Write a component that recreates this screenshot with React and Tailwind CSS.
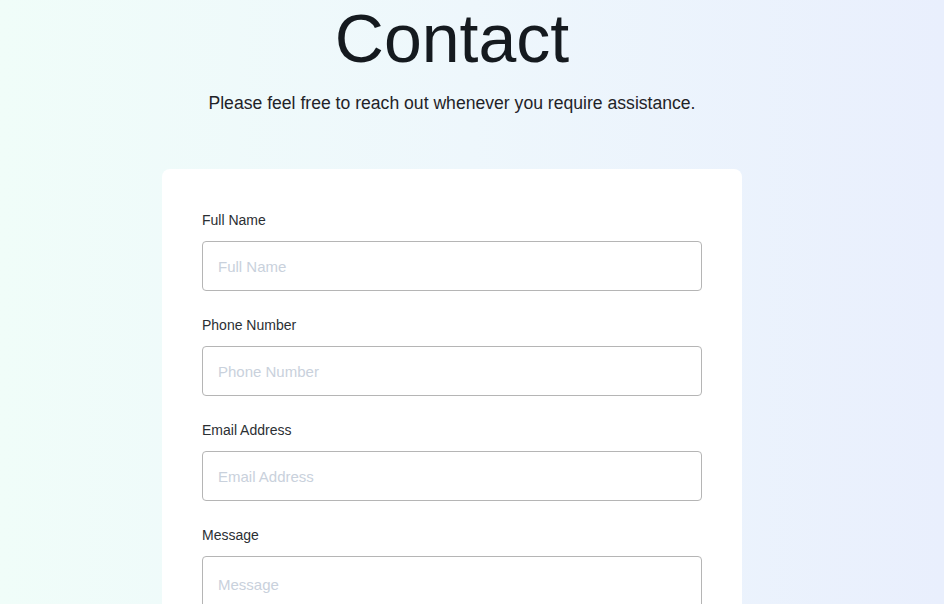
import React from 'react';

const fields = [
  { label: 'Full Name', type: 'text' },
  { label: 'Phone Number', type: 'tel' },
  { label: 'Email Address', type: 'email' },
];

export default function App() {
  return (
    <div className="min-h-screen overflow-hidden bg-linear-to-r from-[#f0fdf9] via-[#eef7fc] to-[#e9effd] font-['Liberation_Sans',Arial,sans-serif]">
      <div className="flex flex-col items-center pr-10">
        <h1 className="mt-1 text-[68px] leading-none text-[#151a1f]">Contact</h1>
        <p className="mt-[17px] text-[17.6px] leading-7 text-[#1f2328]">
          Please feel free to reach out whenever you require assistance.
        </p>

        {/* form card */}
        <form className="mt-[52px] w-[580px] bg-white rounded-lg px-10 pt-[41px] pb-10">
          {fields.map(f => (
            <div key={f.label} className="mb-6">
              <label className="block text-sm leading-5 text-[#2b2f33] mb-[11px]">{f.label}</label>
              <input
                type={f.type}
                placeholder={f.label}
                className="block w-full h-[50px] pl-[15px] pr-4 border border-[#b5b5b5] rounded text-[15px] outline-none placeholder:text-[#c9d1dc]"
              />
            </div>
          ))}
          <div>
            <label className="block text-sm leading-5 text-[#2b2f33] mb-[11px]">Message</label>
            <textarea
              placeholder="Message"
              rows={5}
              className="block w-full h-[150px] pl-[15px] pr-4 py-[17px] border border-[#b5b5b5] rounded text-[15px] outline-none resize-none placeholder:text-[#c9d1dc]"
            />
          </div>
        </form>
      </div>
    </div>
  );
}
